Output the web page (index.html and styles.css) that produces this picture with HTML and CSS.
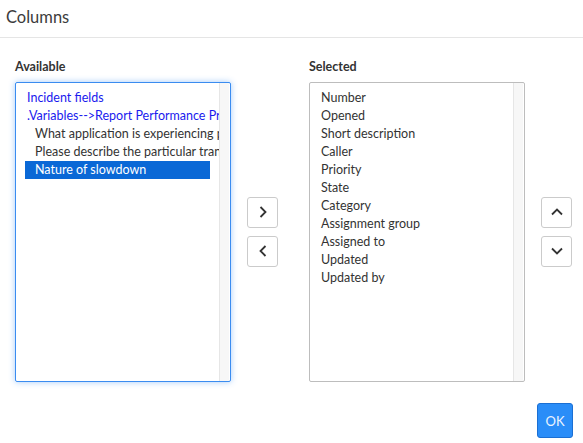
FILE: index.html
```html
<!DOCTYPE html>
<html lang="en">
<head>
  <meta charset="UTF-8">
  <meta name="viewport" content="width=device-width, initial-scale=1.0">
  <title>Columns</title>
  <link rel="stylesheet" href="styles.css">
</head>
<body>
  <header class="modal-header">
    <h1 class="modal-title">Columns</h1>
  </header>

  <div class="modal-body">
    <div class="slush">
      <div class="col">
        <label class="col-label">Available</label>
        <div class="list focused">
          <div class="list-items">
            <div class="group">Incident fields</div>
            <div class="group">.Variables--&gt;Report Performance Problem</div>
            <div class="option">What application is experiencing problems?</div>
            <div class="option">Please describe the particular transaction</div>
            <div class="option selected">Nature of slowdown</div>
          </div>
          <div class="scroll-track"></div>
        </div>
      </div>

      <div class="btn-stack">
        <button class="icon-btn" title="Add">
          <svg width="10" height="14" viewBox="0 0 10 14"><path d="M2.5 2 L7.5 7 L2.5 12" fill="none" stroke="#333" stroke-width="1.8"/></svg>
        </button>
        <button class="icon-btn" title="Remove">
          <svg width="10" height="14" viewBox="0 0 10 14"><path d="M7.5 2 L2.5 7 L7.5 12" fill="none" stroke="#333" stroke-width="1.8"/></svg>
        </button>
      </div>

      <div class="col">
        <label class="col-label">Selected</label>
        <div class="list">
          <div class="list-items">
            <div class="item">Number</div>
            <div class="item">Opened</div>
            <div class="item">Short description</div>
            <div class="item">Caller</div>
            <div class="item">Priority</div>
            <div class="item">State</div>
            <div class="item">Category</div>
            <div class="item">Assignment group</div>
            <div class="item">Assigned to</div>
            <div class="item">Updated</div>
            <div class="item">Updated by</div>
          </div>
          <div class="scroll-track"></div>
        </div>
      </div>

      <div class="btn-stack">
        <button class="icon-btn" title="Move up">
          <svg width="14" height="10" viewBox="0 0 14 10"><path d="M2 7.5 L7 2.5 L12 7.5" fill="none" stroke="#333" stroke-width="1.8"/></svg>
        </button>
        <button class="icon-btn" title="Move down">
          <svg width="14" height="10" viewBox="0 0 14 10"><path d="M2 2.5 L7 7.5 L12 2.5" fill="none" stroke="#333" stroke-width="1.8"/></svg>
        </button>
      </div>
    </div>
  </div>

  <footer class="modal-footer">
    <button class="btn-primary">OK</button>
  </footer>
</body>
</html>
```

FILE: styles.css
```css
body {
  margin: 0;
  font-family: 'Lato', 'Noto Sans', sans-serif;
  color: #333;
  background: #fff;
}

.modal-header {
  height: 37px;
  border-bottom: 1px solid #e5e5e5;
  padding: 0 6px;
}
.modal-title {
  margin: 0;
  font-size: 16.5px;
  font-weight: normal;
  line-height: 34px;
  color: #3c3c3c;
}

.modal-body {
  padding: 21px 0 0 15px;
}

.slush {
  display: flex;
  align-items: flex-end;
}

.col {
  display: flex;
  flex-direction: column;
}
.col-label {
  font-size: 12.5px;
  font-weight: bold;
  line-height: 16px;
  margin-bottom: 7px;
  color: #333;
}

.list {
  display: flex;
  width: 216px;
  height: 300px;
  box-sizing: border-box;
  border: 1px solid #bdbdbd;
  border-radius: 2px;
  overflow: hidden;
}
.list.focused {
  border-color: #3a8cf0;
  box-shadow: 0 0 6px rgba(50, 140, 245, 0.45);
}

.list-items {
  flex: 1;
  overflow: hidden;
  padding: 6px 0 0 9px;
  font-size: 12.5px;
  line-height: 18px;
  white-space: nowrap;
}
.scroll-track {
  width: 9px;
  margin-right: 1px;
  background: #f7f7f7;
  border-left: 1px solid #e6e6e6;
}

.group {
  color: #1a1aee;
  padding-left: 2px;
}
.option {
  width: 175px;
  padding-left: 10px;
  color: #333;
}
.option.selected {
  background: #0a68d6;
  color: #fff;
}
.item {
  padding-left: 2px;
  color: #333;
}

.btn-stack {
  display: flex;
  flex-direction: column;
  gap: 8px;
  align-self: stretch;
  justify-content: center;
  padding-top: 22px;
  margin: 0 31px 0 16px;
}
.btn-stack:last-child {
  margin-right: 0;
}

.icon-btn {
  width: 31px;
  height: 31px;
  padding: 0;
  display: flex;
  align-items: center;
  justify-content: center;
  background: #fff;
  border: 1px solid #cbcbcb;
  border-radius: 3px;
}

.modal-footer {
  display: flex;
  justify-content: flex-end;
  padding: 21px 10px 0 0;
}
.btn-primary {
  width: 36px;
  height: 35px;
  padding: 0;
  font-family: 'Lato', 'Noto Sans', sans-serif;
  font-size: 13px;
  color: #eaf3ff;
  background: #2a8df8;
  border: 1px solid #1b6fd3;
  border-radius: 3px;
}
```
